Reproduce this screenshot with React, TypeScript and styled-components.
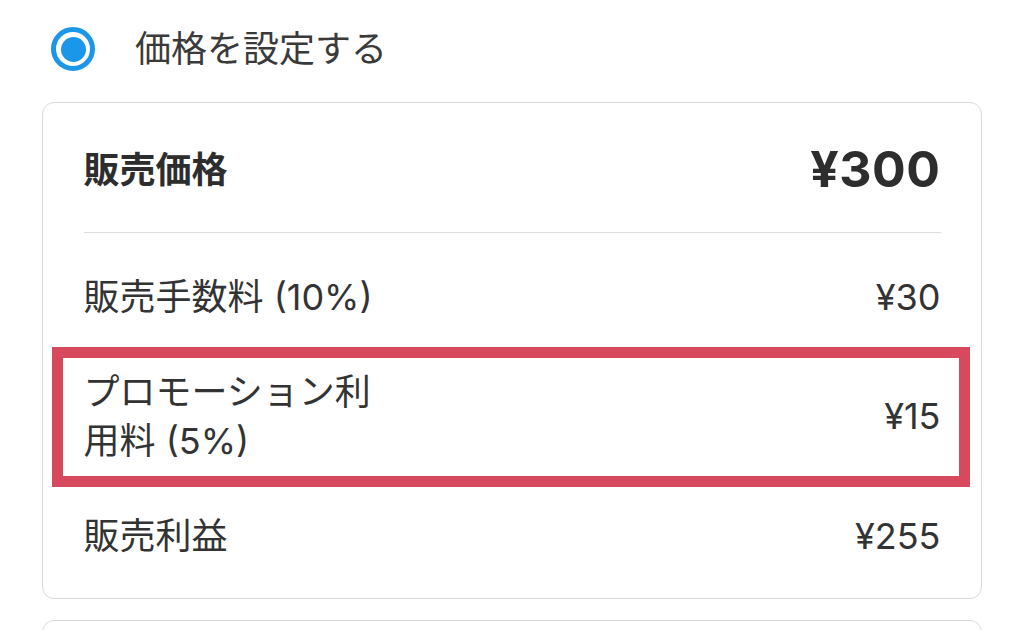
import React from 'react'
import styled, { createGlobalStyle } from 'styled-components';

const GlobalStyle = createGlobalStyle`
    html, body {
        margin: 0;
        padding: 0;
        background: #fff;
    }
    body {
        font-family: Inter, "Noto Sans CJK JP", sans-serif;
        color: #333;
    }
`

const Page = styled.div`
    padding: 0 42px;
`

const RadioRow = styled.label`
    display: flex;
    align-items: center;
    gap: 40px;
    padding: 27px 0 0 9px;
    margin-bottom: 31px;
    font-size: 36px;
    line-height: 44px;
    color: #3a3a3a;
`

const RadioDot = styled.span`
    box-sizing: border-box;
    width: 44px;
    height: 44px;
    border-radius: 50%;
    border: 5.5px solid #1b97ea;
    display: flex;
    align-items: center;
    justify-content: center;
    flex-shrink: 0;

    &::after {
        content: '';
        width: 25px;
        height: 25px;
        border-radius: 50%;
        background: #1b97ea;
    }
`

const Card = styled.div<{ $height?: number }>`
    box-sizing: border-box;
    border: 1.5px solid #dadada;
    border-radius: 12px;
    padding: 0 40.5px;
    display: flex;
    flex-direction: column;
    ${p => p.$height ? `height: ${p.$height}px;` : ''}

    & + & {
        margin-top: 21px;
    }
`

const Header = styled.div`
    height: 128.5px;
    display: flex;
    align-items: center;
    justify-content: space-between;
    border-bottom: 1px solid #dedede;
    font-weight: 700;
    color: #2d2d2d;
`

const HeaderLabel = styled.span`
    font-size: 36px;
`

const HeaderPrice = styled.span`
    font-size: 50px;
    letter-spacing: 0.5px;
    padding-top: 4px;
`

const Row = styled.div<{ $top: number; $bottom: number }>`
    display: flex;
    align-items: center;
    justify-content: space-between;
    padding: ${p => p.$top}px 0 ${p => p.$bottom}px;
    font-size: 36px;
    line-height: 49px;
    color: #333;
`

const Highlight = styled(Row)`
    margin: 0 -29px 0 -32px;
    border: 11px solid #d74a5e;
    padding-left: 21px;
    padding-right: 18px;
`

const Label = styled.span`
    max-width: 300px;
`

export default function App() {
    return (
        <Page>
            <GlobalStyle />
            <RadioRow>
                <RadioDot />
                <span>価格を設定する</span>
            </RadioRow>

            <Card>
                <Header>
                    <HeaderLabel>販売価格</HeaderLabel>
                    <HeaderPrice>¥300</HeaderPrice>
                </Header>
                <Row $top={40.5} $bottom={24.5}>
                    <span>販売手数料 (10%)</span>
                    <span>¥30</span>
                </Row>
                <Highlight $top={10} $bottom={10}>
                    <Label>プロモーション利用料 (5%)</Label>
                    <span>¥15</span>
                </Highlight>
                <Row $top={25.5} $bottom={37}>
                    <span>販売利益</span>
                    <span>¥255</span>
                </Row>
            </Card>

            <Card $height={100} />
        </Page>
    )
}
